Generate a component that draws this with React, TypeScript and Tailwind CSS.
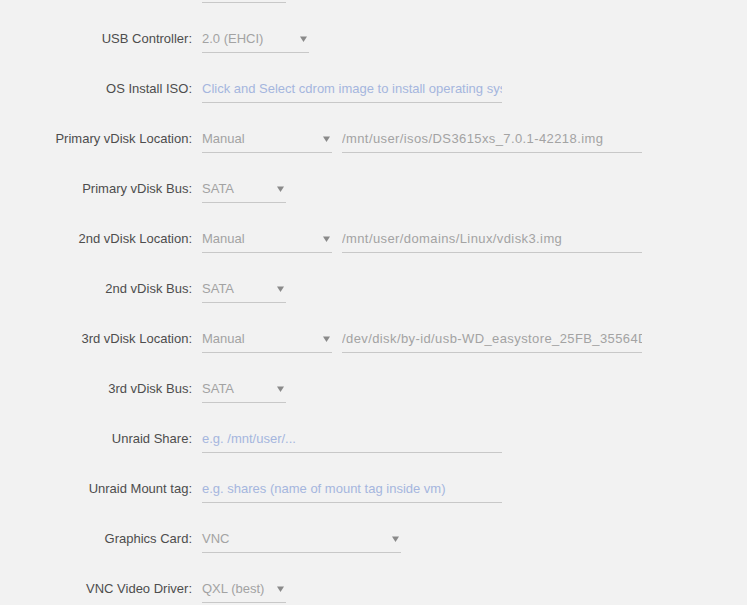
import React from "react";

type Row =
  | { label: string; kind: "select"; value: string; w: string }
  | { label: string; kind: "input"; placeholder: string }
  | { label: string; kind: "disk"; value: string; path: string };

const rows: Row[] = [
  { label: "USB Controller:", kind: "select", value: "2.0 (EHCI)", w: "w-[107px]" },
  { label: "OS Install ISO:", kind: "input", placeholder: "Click and Select cdrom image to install operating system" },
  { label: "Primary vDisk Location:", kind: "disk", value: "Manual", path: "/mnt/user/isos/DS3615xs_7.0.1-42218.img" },
  { label: "Primary vDisk Bus:", kind: "select", value: "SATA", w: "w-[84px]" },
  { label: "2nd vDisk Location:", kind: "disk", value: "Manual", path: "/mnt/user/domains/Linux/vdisk3.img" },
  { label: "2nd vDisk Bus:", kind: "select", value: "SATA", w: "w-[84px]" },
  { label: "3rd vDisk Location:", kind: "disk", value: "Manual", path: "/dev/disk/by-id/usb-WD_easystore_25FB_35564D325A3032" },
  { label: "3rd vDisk Bus:", kind: "select", value: "SATA", w: "w-[84px]" },
  { label: "Unraid Share:", kind: "input", placeholder: "e.g. /mnt/user/..." },
  { label: "Unraid Mount tag:", kind: "input", placeholder: "e.g. shares (name of mount tag inside vm)" },
  { label: "Graphics Card:", kind: "select", value: "VNC", w: "w-[199px]" },
  { label: "VNC Video Driver:", kind: "select", value: "QXL (best)", w: "w-[84px]" },
];

function Select({ value, w }: { value: string; w: string }) {
  return (
    <div className={`${w} mt-[12px] h-[27px] flex items-center justify-between border-b border-[#c8c8c8] text-[#a3a3a3]`}>
      <span>{value}</span>
      <svg width="7" height="6" viewBox="0 0 7 6" className="mr-[2px]">
        <path d="M0 0.5 H7 L3.5 6 Z" fill="#8a8a8a" />
      </svg>
    </div>
  );
}

function TextInput({ text, placeholder }: { text: string; placeholder?: boolean }) {
  return (
    <div
      className={`w-[300px] mt-[12px] h-[27px] flex items-center border-b border-[#c8c8c8] overflow-hidden whitespace-nowrap ${
        placeholder ? "text-[#a5b6de]" : "text-[#a3a3a3] tracking-[0.4px]"
      }`}
    >
      {text}
    </div>
  );
}

export default function App() {
  return (
    <div
      className="min-h-[605px] w-[747px] overflow-hidden bg-[#f2f2f2] text-[13px]"
      style={{ fontFamily: '"Liberation Sans", Arial, sans-serif' }}
    >
      <div className="ml-[202px] w-[84px] h-[3px] border-b border-[#c8c8c8]" />
      <div className="h-[11px]" />
      {rows.map((r) => (
        <div key={r.label} className="flex h-[50px] items-start">
          <div className="w-[192px] mt-[12px] h-[26px] leading-[26px] text-right text-[#4d4d4d] whitespace-nowrap">
            {r.label}
          </div>
          <div className="ml-[10px] flex gap-[10px]">
            {r.kind === "select" && <Select value={r.value} w={r.w} />}
            {r.kind === "input" && <TextInput text={r.placeholder} placeholder />}
            {r.kind === "disk" && (
              <>
                <Select value={r.value} w="w-[130px]" />
                <TextInput text={r.path} />
              </>
            )}
          </div>
        </div>
      ))}
    </div>
  );
}
